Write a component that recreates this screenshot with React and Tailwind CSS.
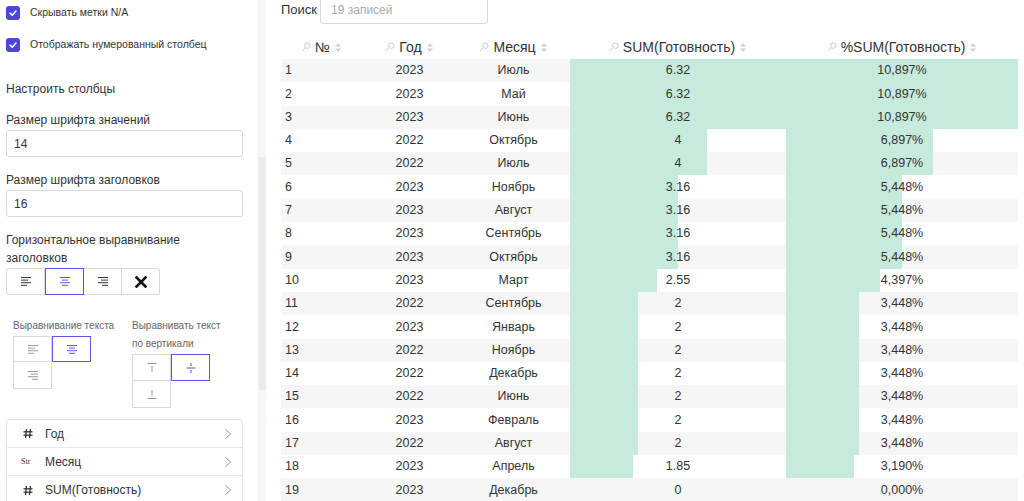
import React from "react";

const rows = [
  [1, 2023, "Июль", 6.32, "6.32", 10.897, "10,897%"],
  [2, 2023, "Май", 6.32, "6.32", 10.897, "10,897%"],
  [3, 2023, "Июнь", 6.32, "6.32", 10.897, "10,897%"],
  [4, 2022, "Октябрь", 4, "4", 6.897, "6,897%"],
  [5, 2022, "Июль", 4, "4", 6.897, "6,897%"],
  [6, 2023, "Ноябрь", 3.16, "3.16", 5.448, "5,448%"],
  [7, 2023, "Август", 3.16, "3.16", 5.448, "5,448%"],
  [8, 2023, "Сентябрь", 3.16, "3.16", 5.448, "5,448%"],
  [9, 2023, "Октябрь", 3.16, "3.16", 5.448, "5,448%"],
  [10, 2023, "Март", 2.55, "2.55", 4.397, "4,397%"],
  [11, 2022, "Сентябрь", 2, "2", 3.448, "3,448%"],
  [12, 2023, "Январь", 2, "2", 3.448, "3,448%"],
  [13, 2022, "Ноябрь", 2, "2", 3.448, "3,448%"],
  [14, 2022, "Декабрь", 2, "2", 3.448, "3,448%"],
  [15, 2022, "Июнь", 2, "2", 3.448, "3,448%"],
  [16, 2023, "Февраль", 2, "2", 3.448, "3,448%"],
  [17, 2022, "Август", 2, "2", 3.448, "3,448%"],
  [18, 2023, "Апрель", 1.85, "1.85", 3.19, "3,190%"],
  [19, 2023, "Декабрь", 0, "0", 0, "0,000%"],
];

const BAR = "#c6eadb";

const barStyle = (pct) => ({
  background: `linear-gradient(to right, ${BAR} ${pct}%, transparent ${pct}%)`,
});

// small icons
const Check = () => (
  <span className="w-[14px] h-[14px] rounded-[3px] bg-[#4f46d8] flex items-center justify-center shrink-0">
    <svg width="10" height="10" viewBox="0 0 10 10" fill="none">
      <path d="M2 5.2 L4.2 7.2 L8 3" stroke="white" strokeWidth="1.6" strokeLinecap="round" strokeLinejoin="round" />
    </svg>
  </span>
);

const Pin = () => (
  <svg width="10" height="10" viewBox="0 0 10 10" fill="none">
    <circle cx="6.3" cy="3.7" r="2.7" stroke="#c4c4c4" strokeWidth="0.9" />
    <path d="M4.4 5.6 L1 9" stroke="#c4c4c4" strokeWidth="0.9" />
  </svg>
);

const Sort = () => (
  <svg width="8" height="11" viewBox="0 0 8 11">
    <path d="M4 1 L7 4.5 L1 4.5 Z" fill="#cfcfcf" />
    <path d="M1 6.5 L7 6.5 L4 10 Z" fill="#cfcfcf" />
  </svg>
);

const AlignIcon = ({ kind, color }) => {
  const lines = {
    left: [[1, 11], [1, 8], [1, 11], [1, 7]],
    center: [[1, 11], [3, 9], [1, 11], [3, 9]],
    right: [[1, 11], [4, 11], [1, 11], [5, 11]],
  }[kind];
  return (
    <svg width="12" height="11" viewBox="0 0 12 11">
      {lines.map(([a, b], i) => (
        <line key={i} x1={a} x2={b} y1={1.5 + i * 2.6} y2={1.5 + i * 2.6} stroke={color} strokeWidth="1" />
      ))}
    </svg>
  );
};

const VIcon = ({ kind, color }) => (
  <svg width="12" height="12" viewBox="0 0 12 12" fill="none" stroke={color} strokeWidth="1">
    {kind === "top" && (
      <>
        <line x1="1.5" x2="10.5" y1="1.5" y2="1.5" />
        <line x1="6" x2="6" y1="4" y2="10" />
      </>
    )}
    {kind === "middle" && (
      <>
        <line x1="1.5" x2="10.5" y1="6" y2="6" />
        <line x1="6" x2="6" y1="1" y2="4" />
        <line x1="6" x2="6" y1="8" y2="11" />
      </>
    )}
    {kind === "bottom" && (
      <>
        <line x1="1.5" x2="10.5" y1="10.5" y2="10.5" />
        <line x1="6" x2="6" y1="2" y2="8" />
      </>
    )}
  </svg>
);

const Chevron = () => (
  <svg width="8" height="12" viewBox="0 0 8 12" fill="none">
    <path d="M1.5 1.5 L6.5 6 L1.5 10.5" stroke="#9a9a9a" strokeWidth="1" />
  </svg>
);

const Hash = () => (
  <svg width="10" height="11" viewBox="0 0 10 11" fill="none" stroke="#333" strokeWidth="1.3">
    <line x1="3.5" x2="2.5" y1="1" y2="10" />
    <line x1="7.5" x2="6.5" y1="1" y2="10" />
    <line x1="0.5" x2="9.5" y1="3.8" y2="3.8" />
    <line x1="0.5" x2="9.5" y1="7.2" y2="7.2" />
  </svg>
);

const HeadCell = ({ label }) => (
  <div className="flex items-center justify-center gap-[4px] text-[14px] text-[#333]">
    <Pin />
    <span>{label}</span>
    <Sort />
  </div>
);

const LeftPanel = () => (
  <div className="w-[258px] shrink-0 pl-[6px] pt-[6px] text-[#333]">
    {/* checkboxes */}
    <div className="flex items-center gap-[10px] h-[14px] text-[10.5px]">
      <Check />
      <span>Скрывать метки N/A</span>
    </div>
    <div className="flex items-center gap-[10px] h-[14px] mt-[18px] text-[10.5px]">
      <Check />
      <span>Отображать нумерованный столбец</span>
    </div>

    <div className="mt-[29px] text-[12px] leading-[16px]">Настроить столбцы</div>

    <div className="mt-[15px] text-[12px] leading-[16px]">Размер шрифта значений</div>
    <div className="mt-[2px] w-[237px] h-[27px] border border-[#d9d9d9] rounded-[3px] flex items-center px-[7px] text-[12px]">
      14
    </div>

    <div className="mt-[15px] text-[12px] leading-[16px]">Размер шрифта заголовков</div>
    <div className="mt-[2px] w-[237px] h-[27px] border border-[#d9d9d9] rounded-[3px] flex items-center px-[7px] text-[12px]">
      16
    </div>

    <div className="mt-[14px] text-[12px] leading-[18px]">
      Горизонтальное выравнивание
      <br />
      заголовков
    </div>
    <div className="mt-[1px] flex">
      <div className="w-[39px] h-[27px] border border-[#d9d9d9] rounded-l-[3px] flex items-center justify-center">
        <AlignIcon kind="left" color="#333" />
      </div>
      <div className="w-[39px] h-[27px] border border-[#5b54e6] flex items-center justify-center">
        <AlignIcon kind="center" color="#5b54e6" />
      </div>
      <div className="w-[38px] h-[27px] border border-l-0 border-[#d9d9d9] flex items-center justify-center">
        <AlignIcon kind="right" color="#333" />
      </div>
      <div className="w-[38px] h-[27px] border border-l-0 border-[#d9d9d9] rounded-r-[3px] flex items-center justify-center">
        <svg width="12" height="12" viewBox="0 0 12 12">
          <path d="M1.5 1.5 L10.5 10.5 M10.5 1.5 L1.5 10.5" stroke="#111" strokeWidth="2.6" strokeLinecap="square" />
        </svg>
      </div>
    </div>

    <div className="mt-[22px] flex text-[10px] leading-[18px] text-[#666]">
      <div className="w-[126px] shrink-0 pl-[7px]">
        <div className="whitespace-nowrap">Выравнивание текста</div>
        <div className="mt-[1px] flex flex-wrap w-[78px]">
          <div className="w-[39px] h-[26px] border border-[#d9d9d9] flex items-center justify-center">
            <AlignIcon kind="left" color="#999" />
          </div>
          <div className="w-[39px] h-[26px] border border-[#5b54e6] flex items-center justify-center">
            <AlignIcon kind="center" color="#5b54e6" />
          </div>
          <div className="w-[39px] h-[27px] border border-t-0 border-[#d9d9d9] flex items-center justify-center">
            <AlignIcon kind="right" color="#999" />
          </div>
        </div>
      </div>
      <div>
        <div className="whitespace-nowrap">Выравнивать текст</div>
        <div>по вертикали</div>
        <div className="mt-[1px] flex flex-wrap w-[78px]">
          <div className="w-[39px] h-[27px] border border-[#d9d9d9] flex items-center justify-center">
            <VIcon kind="top" color="#999" />
          </div>
          <div className="w-[39px] h-[27px] border border-[#5b54e6] flex items-center justify-center">
            <VIcon kind="middle" color="#5b54e6" />
          </div>
          <div className="w-[39px] h-[27px] border border-t-0 border-[#d9d9d9] flex items-center justify-center">
            <VIcon kind="bottom" color="#999" />
          </div>
        </div>
      </div>
    </div>

    {/* columns list */}
    <div className="mt-[11px] w-[237px] border border-[#e3e3e3] rounded-[4px] text-[12px]">
      <div className="h-[28px] flex items-center pl-[16px] pr-[10px] border-b border-[#e8e8e8]">
        <span className="w-[22px]"><Hash /></span>
        <span className="flex-1">Год</span>
        <Chevron />
      </div>
      <div className="h-[28px] flex items-center pl-[14px] pr-[10px] border-b border-[#e8e8e8]">
        <span className="w-[24px] text-[8px] font-['Liberation_Serif',serif] text-[#333]">Str</span>
        <span className="flex-1">Месяц</span>
        <Chevron />
      </div>
      <div className="h-[28px] flex items-center pl-[16px] pr-[10px]">
        <span className="w-[22px]"><Hash /></span>
        <span className="flex-1">SUM(Готовность)</span>
        <Chevron />
      </div>
    </div>
  </div>
);

export default function App() {
  return (
    <div className="w-[1024px] h-[501px] overflow-hidden flex bg-white font-['Liberation_Sans',Arial,sans-serif]">
      <LeftPanel />

      {/* scrollbar */}
      <div className="w-[8px] shrink-0 bg-[#f7f7f7] border-l border-[#f0f0f0]">
        <div className="mt-[157px] h-[233px] bg-[#ebebeb]" />
      </div>

      <div className="flex-1 pl-[15px] pr-[6px]">
        {/* search */}
        <div className="flex items-center gap-[3px] -mt-[4px] h-[28px]">
          <span className="text-[13px] text-[#333]">Поиск</span>
          <div className="w-[168px] h-[28px] border border-[#d9d9d9] rounded-[3px] flex items-center px-[10px] text-[12px] text-[#aaa]">
            19 записей
          </div>
        </div>

        {/* table */}
        <div className="mt-[11px] w-[737px]">
          <div className="grid grid-cols-[81px_95px_113px_216px_232px] h-[24px] items-center">
            <HeadCell label="№" />
            <HeadCell label="Год" />
            <HeadCell label="Месяц" />
            <HeadCell label="SUM(Готовность)" />
            <HeadCell label="%SUM(Готовность)" />
          </div>
          {rows.map(([n, year, month, v, vs, p, ps]) => (
            <div
              key={n}
              className={`grid grid-cols-[81px_95px_113px_216px_232px] h-[23.3px] text-[12.5px] text-[#333] ${
                n % 2 === 1 ? "bg-[#f6f6f6]" : "bg-white"
              }`}
            >
              <div className="flex items-center pl-[4px]">{n}</div>
              <div className="flex items-center justify-center">{year}</div>
              <div className="flex items-center justify-center">{month}</div>
              <div className="flex items-center justify-center" style={barStyle((v / 6.32) * 100)}>
                {vs}
              </div>
              <div className="flex items-center justify-center" style={barStyle((p / 10.897) * 100)}>
                {ps}
              </div>
            </div>
          ))}
        </div>
      </div>
    </div>
  );
}
